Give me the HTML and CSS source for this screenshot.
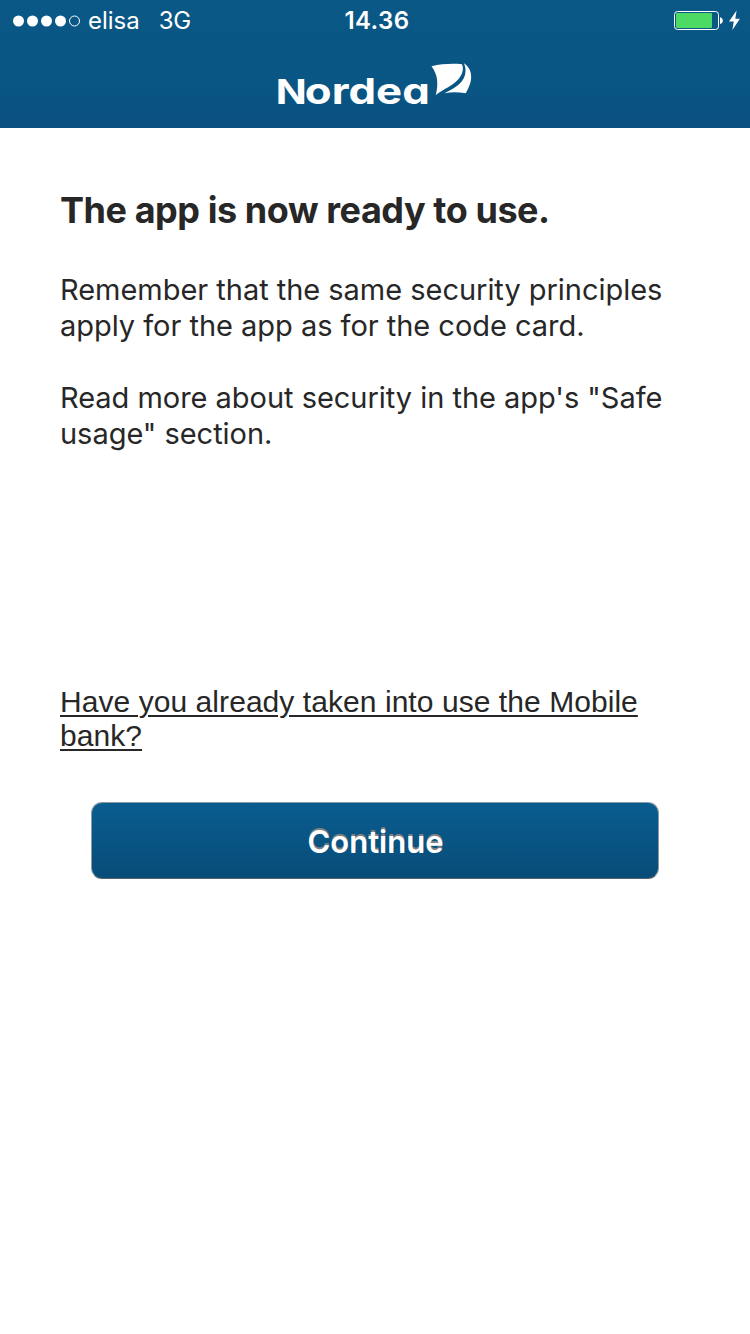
FILE: index.html
```html
<!DOCTYPE html>
<html lang="en">
<head>
<meta charset="utf-8">
<title>Nordea</title>
<link rel="stylesheet" href="styles.css">
</head>

<body>
<header class="header">
    <div class="status">
        <div class="status-left">
            <svg class="signal" width="68" height="12" viewBox="0 0 68 12">
                <circle cx="5.5" cy="6" r="5.5"/>
                <circle cx="19.5" cy="6" r="5.5"/>
                <circle cx="33.5" cy="6" r="5.5"/>
                <circle cx="47.5" cy="6" r="5.5"/>
                <circle class="signal-off" cx="61.5" cy="6" r="5"/>
            </svg>
            <span class="carrier">elisa</span>
            <span class="network">3G</span>
        </div>
        <div class="time">14.36</div>
        <div class="status-right">
            <svg width="70" height="22" viewBox="0 0 70 22">
                <rect class="battery" x="4.5" y="1.5" width="44" height="18" rx="3"/>
                <rect class="battery-level" x="6" y="3" width="36" height="15" rx="1"/>
                <path class="white" d="M50 7.2c2 .4 2.8 1.800 2.800 3.400s-.8 3-2.800 3.400z"/>
                <path class="white" d="M66.600 0.500L59 11.500h4.700L62.400 20l7.500-11.200h-4.600z"/>
            </svg>
        </div>
    </div>
    <svg class="logo" width="210" height="60" viewBox="0 0 210 60">
        <text class="logo-text" y="44.300"><tspan class="logo-n" x="0.800" textLength="31" lengthAdjust="spacingAndGlyphs">N</tspan><tspan x="29.800" textLength="125" lengthAdjust="spacingAndGlyphs">ordea</tspan></text>
        <path class="white" d="M156.500 6.200C166.500 4 176.500 3.300 187 4.200C189 8.500 187.500 14 184 18.500C179 25 169 29 160.800 35C163.500 24 163 15 156.500 6.200z"/>
        <path class="white" d="M189 3.300C194.500 7 197 13 196 20C195 25 193 29.500 190.700 33.300C183 32 176.500 32 169.500 33.300C177 29.500 185 25 188.300 19C191 14.500 191.300 9 189 3.300z"/>
    </svg>
</header>

<main class="content">
    <h1>The app is now ready to use.</h1>
    <p>Remember that the same security principles<br>apply for the app as for the code card.</p>
    <p>Read more about security in the app's "Safe<br>usage" section.</p>
    <a class="link" href="#">Have you already taken into use the Mobile<br>bank?</a>
    <button class="continue">Continue</button>
</main>
</body>
</html>
```
FILE: styles.css
```css
body {
    margin: 0;
    background-color: white;
    color: #272727;
    font-family: Inter, "Liberation Sans", sans-serif;
}
.header {
    height: 128px;
    background: linear-gradient(#0a5886, #095583 70%, #0a5080);
    color: white;
}
.status {
    display: grid;
    grid-template-columns: 1fr auto 1fr;
    height: 41px;
    align-items: center;
    font-size: 24px;
}
.status-left {
    display: flex;
    align-items: center;
    padding-left: 13px;
}
.signal {
    fill: white;
}
.signal-off {
    fill: none;
    stroke: white;
    stroke-width: 1;
}
.carrier {
    margin-left: 7px;
}
.network {
    margin-left: 19px;
    letter-spacing: -0.4px;
}
.time {
    font-weight: 600;
    padding-left: 4px;
    letter-spacing: 0.4px;
}
.status-right {
    display: flex;
    justify-content: flex-end;
    padding-right: 10px;
}
.battery {
    fill: none;
    stroke: white;
}
.battery-level {
    fill: #4cd964;
}
.white {
    fill: white;
}
.logo {
    display: block;
    margin: 19px 0 0 275px;
}
.logo-text {
    font: 700 36px Inter, sans-serif;
    font-feature-settings: "cv11";
    fill: white;
}
.logo-n {
    font-size: 34px;
}
.content {
    display: flex;
    flex-direction: column;
    padding: 61px 60px 0;
}
h1 {
    margin: 0 0 41px;
    font-size: 36px;
    line-height: 42px;
    font-weight: 700;
    letter-spacing: -0.44px;
}
p {
    margin: 0 0 36px;
    font-size: 29px;
    line-height: 36px;
    letter-spacing: -0.03px;
    white-space: nowrap;
}
.link {
    margin-top: 197px;
    color: #272727;
    font: 30px/34px "Liberation Sans", sans-serif;
    letter-spacing: 0.06px;
    text-decoration-thickness: 2px;
    text-underline-offset: 3px;
    white-space: nowrap;
}
.continue {
    height: 77px;
    margin: 49px 31px 0 31px;
    padding: 2px 0 0 1px;
    border: 1px solid #8a9ba5;
    border-bottom-color: #56646c;
    border-radius: 11px;
    background: linear-gradient(#0a5d90, #084c78);
    color: white;
    font: 600 31px Inter, sans-serif;
    text-shadow: 0 -2px 0 #808080;
}
```
